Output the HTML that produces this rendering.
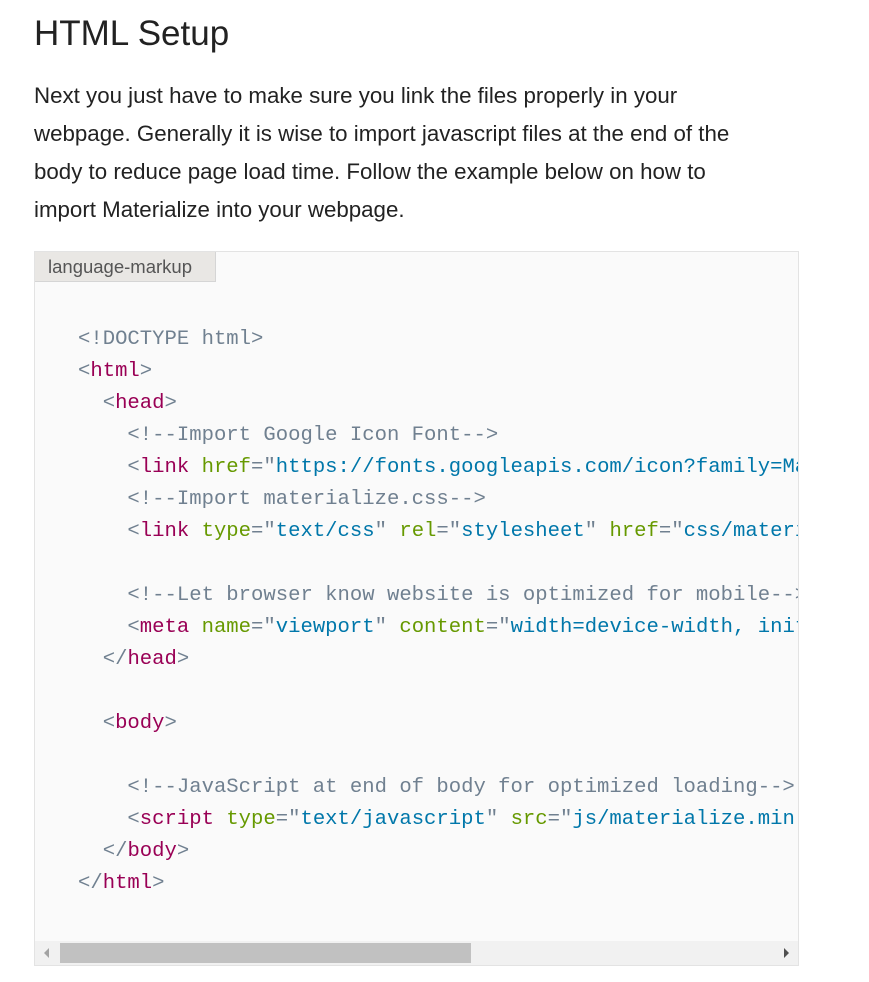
<!DOCTYPE html>
<html><head><style>
body{margin:0;background:#fff;width:869px;height:982px;overflow:hidden;font-family:"Liberation Sans",sans-serif;color:#222}
h2{position:absolute;left:34px;top:14px;margin:0;font-weight:400;font-size:35px;color:#222}
p{position:absolute;left:34px;top:77px;margin:0;font-size:22.3px;line-height:38px;white-space:nowrap;color:#222}
.box{position:absolute;left:34px;top:251px;width:765px;height:715px;border:1px solid #e3e3e3;background:#fafafa;box-sizing:border-box}
.lbl{position:absolute;left:0;top:0;width:181px;height:30px;background:#e9e7e4;border-right:1px solid #d5d5d5;border-bottom:1px solid #d5d5d5;font-size:18.5px;color:#555;line-height:30px;padding-left:13px;box-sizing:border-box}
pre{position:absolute;left:43px;top:72px;margin:0;width:720px;overflow:hidden;font-family:"Liberation Mono",monospace;font-size:20.6px;line-height:32px;color:#708090}
.t{color:#990055}.a{color:#669900}.v{color:#0077aa}
.sb{position:absolute;left:0;bottom:0;width:763px;height:24px;background:#f1f1f1}
.th{position:absolute;left:25px;top:2px;width:411px;height:20px;background:#c1c1c1}
.la{position:absolute;left:9px;top:7px;border-right:5px solid #a3a3a3;border-top:5px solid transparent;border-bottom:5px solid transparent}
.ra{position:absolute;right:9px;top:7px;border-left:5px solid #505050;border-top:5px solid transparent;border-bottom:5px solid transparent}
</style></head><body>
<h2>HTML Setup</h2>
<p>Next you just have to make sure you link the files properly in your<br>webpage. Generally it is wise to import javascript files at the end of the<br>body to reduce page load time. Follow the example below on how to<br>import Materialize into your webpage.</p>
<div class="box"><div class="lbl">language-markup</div>
<pre>&lt;!DOCTYPE html&gt;
&lt;<span class="t">html</span>&gt;
  &lt;<span class="t">head</span>&gt;
    &lt;!--Import Google Icon Font--&gt;
    &lt;<span class="t">link</span> <span class="a">href</span>="<span class="v">https://fonts.googleapis.com/icon?family=Material+Icons</span>" rel="stylesheet"&gt;
    &lt;!--Import materialize.css--&gt;
    &lt;<span class="t">link</span> <span class="a">type</span>="<span class="v">text/css</span>" <span class="a">rel</span>="<span class="v">stylesheet</span>" <span class="a">href</span>="<span class="v">css/materialize.min.css</span>"&gt;

    &lt;!--Let browser know website is optimized for mobile--&gt;
    &lt;<span class="t">meta</span> <span class="a">name</span>="<span class="v">viewport</span>" <span class="a">content</span>="<span class="v">width=device-width, initial-scale=1.0</span>"/&gt;
  &lt;/<span class="t">head</span>&gt;

  &lt;<span class="t">body</span>&gt;

    &lt;!--JavaScript at end of body for optimized loading--&gt;
    &lt;<span class="t">script</span> <span class="a">type</span>="<span class="v">text/javascript</span>" <span class="a">src</span>="<span class="v">js/materialize.min.js</span>"&gt;&lt;/script&gt;
  &lt;/<span class="t">body</span>&gt;
&lt;/<span class="t">html</span>&gt;</pre>
<div class="sb"><div class="la"></div><div class="th"></div><div class="ra"></div></div>
</div>
</body></html>
